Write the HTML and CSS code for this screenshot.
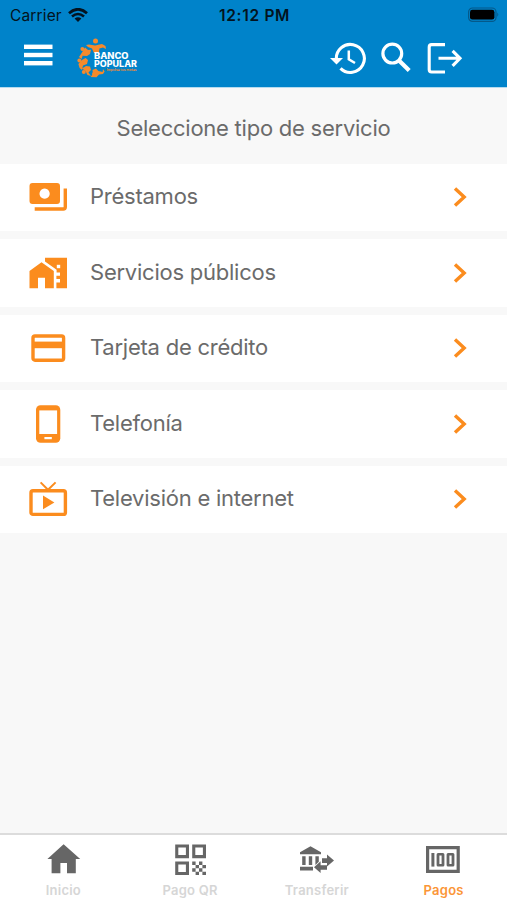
FILE: index.html
```html
<!DOCTYPE html>
<html lang="es">
<head>
    <meta charset="UTF-8">
    <meta name="viewport" content="width=device-width, initial-scale=1.0">
    <title>Banco Popular - Pagos</title>
    <link rel="stylesheet" href="styles.css">
</head>
<body>

<header class="header">
    <div class="status-bar">
        <div class="carrier">
            <span>Carrier</span>
            <svg width="20" height="15" viewBox="0 0 20 15">
                <path d="M1 5.2 Q10 -2.6 19 5.2" fill="none" stroke="#031320" stroke-width="2.8"/>
                <path d="M4 8.6 Q10 3.4 16 8.6" fill="none" stroke="#031320" stroke-width="2.6"/>
                <path d="M6.6 10.6 Q10 7.8 13.4 10.6 L10 14 Z" fill="#031320"/>
            </svg>
        </div>
        <span class="clock">12:12 PM</span>
        <svg class="battery" width="31" height="16" viewBox="0 0 31 16">
            <rect x="0.6" y="1" width="27.4" height="13.4" rx="4" fill="none" stroke="#04598a" stroke-width="1.2"/>
            <rect x="2" y="2.8" width="24.4" height="9.8" rx="2.4" fill="#000"/>
            <path d="M29.3 5.6 Q31.2 7.7 29.3 9.8 Z" fill="#04598a"/>
        </svg>
    </div>
    <div class="toolbar">
        <svg class="menu" width="29" height="22" viewBox="0 0 29 22" fill="#fff">
            <rect y="0.6" width="28.5" height="4.4"/>
            <rect y="8.8" width="28.5" height="4.4"/>
            <rect y="17" width="28.5" height="4.4"/>
        </svg>
        <svg class="logo" width="64" height="42" viewBox="0 0 64 42">
            <g fill="#f58a2c">
                <circle cx="18.5" cy="4" r="2.5"/>
                <path d="M9 8 L12 7.4 L18 8.4 L25 7 L28.5 9 L29 12 L26 10.4 L22.4 11.4 L22 15 L17 16 L15 11.4 L11 10 Z"/>
                <circle cx="5.4" cy="12" r="2"/>
                <path d="M4 17 L8 10.5 L11 13 L14 12.8 L13 17 L10 19 L5.6 18.8 L4.6 22 L2 20 Z"/>
                <circle cx="2.4" cy="23.6" r="2"/>
                <path d="M1.4 27 L5 23 L8.6 21 L11 23 L10 27 L6 28.6 L5 33 L2.6 31 Z"/>
                <circle cx="6.8" cy="35" r="2"/>
                <path d="M5 31.5 L9 29 L13 29.6 L14 33 L11.4 35.4 L14 39 L10.5 38 L8.5 34 Z"/>
                <circle cx="17" cy="37" r="2"/>
                <path d="M15.5 33 L19 31.4 L21.4 34 L25.6 35 L26 32 L27.6 34.4 L26 37 L22 37.4 L19.5 40.2 L13.5 40 L16 37 Z"/>
            </g>
            <text class="logo-text" x="17" y="22" textLength="34.5" lengthAdjust="spacingAndGlyphs">BANCO</text>
            <text class="logo-text" x="17" y="30" textLength="43" lengthAdjust="spacingAndGlyphs">POPULAR</text>
            <text class="logo-tag" x="29.5" y="34.4" textLength="30" lengthAdjust="spacingAndGlyphs">Impulsa tus metas</text>
        </svg>
        <div class="actions">
            <svg width="36" height="34" viewBox="0 0 36 34">
                <path d="M6.4 18.6 A14 14 0 1 1 10.5 27.4" fill="none" stroke="#fff" stroke-width="3.1"/>
                <path d="M0 17 H13 L6.5 23.4 Z" fill="#fff"/>
                <path d="M18.8 9.4 V18.2 L25 22" fill="none" stroke="#fff" stroke-width="2.5"/>
            </svg>
            <svg width="31" height="34" viewBox="0 0 31 34" fill="none" stroke="#fff">
                <circle cx="11.3" cy="12.6" r="9.4" stroke-width="3.2"/>
                <path d="M18 19.4 L28.2 29.4" stroke-width="4.2"/>
            </svg>
            <svg width="36" height="34" viewBox="0 0 36 34" fill="none" stroke="#fff" stroke-width="3.1">
                <path d="M18 3.6 H4.6 Q2.2 3.6 2.2 6 V28.6 Q2.2 31 4.6 31 H18"/>
                <path d="M11.5 17.3 H32.6 M25.6 9.8 L33 17.3 L25.6 24.8"/>
            </svg>
        </div>
    </div>
</header>

<main>
    <h1>Seleccione tipo de servicio</h1>

    <ul class="services">
        <li>
            <svg class="icon" viewBox="0 0 40 40">
                <path fill-rule="evenodd" d="M4.5 6 H29 Q32 6 32 9 V24 Q32 27 29 27 H4.5 Q1.5 27 1.5 24 V9 Q1.5 6 4.5 6 Z M16.6 11.6 A5.1 5.1 0 1 0 16.61 11.6 Z"/>
                <path class="line" d="M37.3 11.5 V30 Q37.3 32 35.3 32 H6.7"/>
            </svg>
            <span>Préstamos</span>
            <svg class="chevron" viewBox="0 0 14 22"><path d="M2 2.4 L11.2 11 L2 19.6"/></svg>
        </li>
        <li>
            <svg class="icon" viewBox="0 0 40 40">
                <path d="M13.5 9.3 L25.8 18 V35.3 H17 V24.8 H10 V35.3 H1.5 V18 Z"/>
                <path d="M17 4.8 H39 V35.3 H28.4 V29.4 H32 V26 H28.4 V22.8 H32 V19.4 H28.6 V16.8 L17 8.4 Z"/>
                <rect x="28.8" y="11.8" width="3.4" height="3.4" fill="#fff"/>
            </svg>
            <span>Servicios públicos</span>
            <svg class="chevron" viewBox="0 0 14 22"><path d="M2 2.4 L11.2 11 L2 19.6"/></svg>
        </li>
        <li>
            <svg class="icon" viewBox="0 0 40 40">
                <rect class="line" x="5" y="8" width="30.6" height="24.2" rx="2"/>
                <rect x="4" y="13.6" width="32" height="6.6"/>
            </svg>
            <span>Tarjeta de crédito</span>
            <svg class="chevron" viewBox="0 0 14 22"><path d="M2 2.4 L11.2 11 L2 19.6"/></svg>
        </li>
        <li>
            <svg class="icon" viewBox="0 0 40 40">
                <rect x="8" y="1.2" width="24.3" height="37.6" rx="4.5"/>
                <rect x="11.3" y="6.4" width="17.8" height="23.6" fill="#fff"/>
                <rect x="16.4" y="33" width="7.4" height="2.2" fill="#fff"/>
            </svg>
            <span>Telefonía</span>
            <svg class="chevron" viewBox="0 0 14 22"><path d="M2 2.4 L11.2 11 L2 19.6"/></svg>
        </li>
        <li>
            <svg class="icon" viewBox="0 0 40 40">
                <rect class="line" x="3" y="11.8" width="34.4" height="23.6" rx="2"/>
                <path class="antenna" d="M12.6 3.4 L20 10.8 L27.6 3.4"/>
                <path d="M15 16.6 L26.4 23.4 L15 30.2 Z"/>
            </svg>
            <span>Televisión e internet</span>
            <svg class="chevron" viewBox="0 0 14 22"><path d="M2 2.4 L11.2 11 L2 19.6"/></svg>
        </li>
    </ul>
</main>

<nav class="tabs">
    <a>
        <svg viewBox="0 0 36 32">
            <path d="M18.6 .2 L35.2 15 H30.8 V29.2 H22 V19 H15.4 V29.2 H6.6 V15 H2.4 Z"/>
        </svg>
        <span>Inicio</span>
    </a>
    <a>
        <svg viewBox="0 0 36 32">
            <path fill-rule="evenodd" d="M3.2 .5 H17 V14.2 H3.2 Z M6.3 3.6 V11.1 H13.9 V3.6 Z M20.2 .5 H34 V14.2 H20.2 Z M23.3 3.6 V11.1 H30.9 V3.6 Z M3.2 17.5 H17 V31 H3.2 Z M6.3 20.6 V27.9 H13.9 V20.6 Z"/>
            <path d="M20.2 17.5h3.4v3.4h-3.4z M27 17.5h3.4v3.4H27z M23.6 20.9H27v3.4h-3.4z M30.4 20.9H34v3.4h-3.6z M20.2 24.3h3.4v3.4h-3.4z M27 24.3h3.4v3.4H27z M23.6 27.7H27V31h-3.4z M30.4 27.7H34V31h-3.6z"/>
        </svg>
        <span>Pago QR</span>
    </a>
    <a>
        <svg viewBox="0 0 36 32">
            <path d="M11.5 2.2 L22 8.2 V10.2 H1 V8.2 Z M3.2 12.2h3.4v8.8H3.2z M9.8 12.2h3.4v8.8H9.8z M16.4 12.2h3.4v5.6l-3.4 3.2z M1 22.8h13v3.6H1z"/>
            <path d="M23 14.2 H28 V10.6 L35 16.6 L28 22.4 V19 H23 Z M21.6 17.2 V21.2 H28 V25.8 H21.6 V29 L15 23.2 Z"/>
        </svg>
        <span>Transferir</span>
    </a>
    <a class="active">
        <svg viewBox="0 0 36 32">
            <path fill-rule="evenodd" d="M0 2 H33.8 V29 H0 Z M3.2 5.2 V25.8 H30.6 V5.2 Z"/>
            <path d="M5.4 9h3v13.6h-3z"/>
            <path fill-rule="evenodd" d="M12.1 9 H16.9 Q18.4 9 18.4 10.5 V21.1 Q18.4 22.6 16.9 22.6 H12.1 Q10.6 22.6 10.6 21.1 V10.5 Q10.6 9 12.1 9 Z M13.4 11.6 V20 H15.6 V11.6 Z M22.1 9 H26.9 Q28.4 9 28.4 10.5 V21.1 Q28.4 22.6 26.9 22.6 H22.1 Q20.6 22.6 20.6 21.1 V10.5 Q20.6 9 22.1 9 Z M23.4 11.6 V20 H25.6 V11.6 Z"/>
        </svg>
        <span>Pagos</span>
    </a>
</nav>

</body>
</html>
```
FILE: styles.css
```css
* {
    box-sizing: border-box;
}

body {
    font-family: Inter, "Liberation Sans", sans-serif;
    background-color: #f8f8f8;
    color: #6b6b6b;
    display: flex;
    flex-direction: column;
    height: 900px;
    margin: 0;
}

svg {
    display: block;
    flex-shrink: 0;
}

.header {
    background-color: #0083ca;
    height: 88px;
    border-bottom: 1px solid #b5dbef;
}

.status-bar {
    display: grid;
    grid-template-columns: 1fr auto 1fr;
    align-items: center;
    height: 30px;
    padding: 0 8px 0 10px;
    color: #031320;
    font-size: 15.5px;
}

.carrier {
    display: flex;
    align-items: center;
    gap: 6px;
    letter-spacing: 0.15px;
}

.clock {
    font-weight: 600;
    letter-spacing: 0.7px;
}

.battery {
    justify-self: end;
}

.toolbar {
    display: flex;
    align-items: center;
    height: 56px;
    padding: 0 44px 0 24px;
}

.menu {
    margin: 0 24px 6px 0;
}

.logo-text {
    font-size: 8.4px;
    font-weight: 800;
    fill: #fff;
}

.logo-tag {
    font-size: 3.4px;
    font-weight: 600;
    fill: #f58a2c;
}

.actions {
    display: flex;
    gap: 15px;
    margin-left: auto;
}

main {
    flex: 1;
}

h1 {
    margin: 0;
    height: 75.5px;
    line-height: 80px;
    font-size: 22px;
    font-weight: 400;
    letter-spacing: -0.24px;
    text-align: center;
}

.services {
    display: flex;
    flex-direction: column;
    gap: 8px;
    list-style: none;
    margin: 0;
    padding: 0;
}

.services li {
    display: flex;
    align-items: center;
    height: 67.5px;
    padding: 0 40px 0 28px;
    background-color: #fff;
    font-size: 22px;
    letter-spacing: -0.24px;
}

.services span {
    flex: 1;
    margin-left: 22px;
    line-height: 26px;
    padding-bottom: 2px;
}

.icon {
    width: 40px;
    height: 40px;
    fill: #fb8c1e;
}

.icon .line {
    fill: none;
    stroke: #fb8c1e;
    stroke-width: 3.4;
}

.icon .antenna {
    fill: none;
    stroke: #fb8c1e;
    stroke-width: 2;
}

.chevron {
    width: 14px;
    height: 22px;
    fill: none;
    stroke: #fb8c1e;
    stroke-width: 3.4;
}

.tabs {
    display: grid;
    grid-template-columns: repeat(4, 1fr);
    height: 67px;
    border-top: 2px solid #dcdcdc;
    background-color: #fff;
}

.tabs a {
    display: flex;
    flex-direction: column;
    align-items: center;
    padding-top: 9px;
    color: #d6d6d6;
    font-size: 13px;
    font-weight: 600;
    letter-spacing: 0.25px;
    line-height: 16px;
}

.tabs svg {
    width: 36px;
    height: 32px;
    margin-bottom: 6px;
    fill: #666;
}

.tabs .active {
    color: #fb9637;
}
```
